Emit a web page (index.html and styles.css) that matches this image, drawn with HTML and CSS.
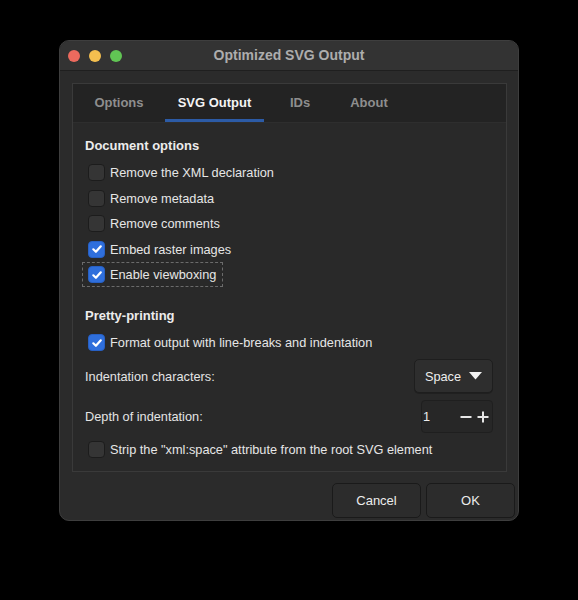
FILE: index.html
```html
<!DOCTYPE html>
<html>
<head>
<meta charset="utf-8">
<link rel="stylesheet" href="styles.css">
</head>
<body>
<div class="window">
  <div class="titlebar">
    <div class="lights">
      <span class="light red"></span>
      <span class="light yellow"></span>
      <span class="light green"></span>
    </div>
    <div class="title">Optimized SVG Output</div>
  </div>
  <div class="body">
    <div class="pane">
      <div class="tabs">
        <div class="tab t-options">Options</div>
        <div class="tab t-svg active">SVG Output</div>
        <div class="tab t-ids">IDs</div>
        <div class="tab t-about">About</div>
      </div>
      <div class="content">
        <div class="group-title">Document options</div>
        <div class="row"><label class="check"><span class="box"></span>Remove the XML declaration</label></div>
        <div class="row"><label class="check"><span class="box"></span>Remove metadata</label></div>
        <div class="row"><label class="check"><span class="box"></span>Remove comments</label></div>
        <div class="row"><label class="check"><span class="box on"><svg viewBox="0 0 12 12" width="12" height="12"><path d="M2.3 6.3 L4.9 8.8 L9.8 3.3" fill="none" stroke="#fff" stroke-width="2.2" stroke-linecap="round" stroke-linejoin="round"/></svg></span>Embed raster images</label></div>
        <div class="row"><label class="check focus"><span class="box on"><svg viewBox="0 0 12 12" width="12" height="12"><path d="M2.3 6.3 L4.9 8.8 L9.8 3.3" fill="none" stroke="#fff" stroke-width="2.2" stroke-linecap="round" stroke-linejoin="round"/></svg></span>Enable viewboxing</label></div>

        <div class="group-title second">Pretty-printing</div>
        <div class="row"><label class="check"><span class="box on"><svg viewBox="0 0 12 12" width="12" height="12"><path d="M2.3 6.3 L4.9 8.8 L9.8 3.3" fill="none" stroke="#fff" stroke-width="2.2" stroke-linecap="round" stroke-linejoin="round"/></svg></span>Format output with line-breaks and indentation</label></div>
        <div class="field field-chars">
          <span class="field-label">Indentation characters:</span>
          <div class="dropdown">Space <svg viewBox="0 0 13 8" width="13" height="8"><path d="M0 0 H13 L6.5 7.5 Z" fill="#f2f2f2"/></svg></div>
        </div>
        <div class="field field-depth">
          <span class="field-label">Depth of indentation:</span>
          <div class="spin"><span class="spin-val">1</span><span class="spin-btns"><svg viewBox="0 0 12 12" width="12" height="12"><path d="M0.5 6 H11.5" stroke="#e6e6e6" stroke-width="2"/></svg><svg viewBox="0 0 12 12" width="12" height="12"><path d="M0.5 6 H11.5 M6 0.5 V11.5" stroke="#e6e6e6" stroke-width="2"/></svg></span></div>
        </div>
        <div class="row row-last"><label class="check"><span class="box"></span>Strip the "xml:space" attribute from the root SVG element</label></div>
      </div>
    </div>
  </div>
  <div class="footer">
    <button class="btn">Cancel</button>
    <button class="btn">OK</button>
  </div>
</div>
</body>
</html>
```
FILE: styles.css
```css
* { box-sizing: border-box; }
html, body { margin: 0; padding: 0; background: #000; }
body {
  font-family: "Liberation Sans", Arial, sans-serif;
  font-size: 12.75px;
  color: #e4e4e4;
  padding: 40px 0 0 59px;
}
.window {
  width: 460px;
  height: 481px;
  background: #2b2b2b;
  border-radius: 10px;
  border: 1px solid #3e3e3e;
  display: flex;
  flex-direction: column;
  overflow: hidden;
}
.titlebar {
  height: 30px;
  background: #333333;
  border-bottom: 1px solid #1f1f1f;
  display: flex;
  align-items: center;
  position: relative;
}
.lights {
  display: flex;
  gap: 9px;
  padding-left: 8px;
}
.light {
  width: 12px;
  height: 12px;
  border-radius: 50%;
  display: block;
}
.red { background: #ec6a5e; }
.yellow { background: #f4bf4f; }
.green { background: #61c554; }
.title {
  position: absolute;
  left: 0; right: 0; top: 0;
  line-height: 29px;
  text-align: center;
  font-weight: bold;
  font-size: 14px;
  color: #adadad;
  pointer-events: none;
}
.body {
  padding: 12px 12px 0 12px;
}
.pane {
  width: 435px;
  height: 389px;
  border: 1px solid #3a3a3a;
  background: #292929;
  display: flex;
  flex-direction: column;
}
.tabs {
  height: 39px;
  background: #232323;
  display: flex;
  align-items: stretch;
  border-bottom: 1px solid #2e2e2e;
}
.tab {
  font-weight: bold;
  font-size: 13px;
  color: #8e8e8e;
  display: flex;
  align-items: center;
  justify-content: center;
  border-bottom: 3px solid transparent;
  padding-top: 2px;
}
.tab.active { color: #f4f4f4; border-bottom-color: #2c5ba6; }
.t-options { width: 92px; }
.t-svg { width: 99px; }
.t-ids { width: 72px; }
.t-about { width: 66px; }
.content {
  padding: 13px 13px 0 12px;
  display: flex;
  flex-direction: column;
}
.group-title {
  height: 20px;
  line-height: 20px;
  font-weight: bold;
  font-size: 13px;
  color: #ececec;
  margin-bottom: 4px;
}
.group-title.second { margin-top: 18.5px; }
.row {
  height: 25.5px;
  display: flex;
  align-items: center;
}
.check {
  display: inline-flex;
  align-items: center;
  height: 23px;
  margin-left: -2px;
  padding: 0 6px 0 5px;
  gap: 5px;
  color: #e6e6e6;
}
.check.focus {
  outline: 1px dashed #6b6b6b;
}
.box {
  width: 17px;
  height: 17px;
  border-radius: 4px;
  background: #353535;
  border: 1px solid #1c1c1c;
  display: flex;
  align-items: center;
  justify-content: center;
}
.box.on {
  background: #2f6fdc;
  border-color: #2760c4;
}
.field {
  display: flex;
  align-items: center;
  justify-content: space-between;
}
.field-chars { height: 34px; margin-top: 3.5px; }
.field-depth { height: 33px; margin-top: 7px; }
.dropdown {
  width: 79px;
  height: 34px;
  border-radius: 5px;
  background: #2e2e2e;
  border: 1px solid #1e1e1e;
  display: flex;
  align-items: center;
  justify-content: center;
  gap: 8px;
  color: #ededed;
  box-shadow: 0 1px 0 #202020;
}
.spin {
  width: 72px;
  height: 33px;
  border-radius: 4px;
  background: #272727;
  border: 1px solid #1f1f1f;
  display: flex;
  align-items: center;
  justify-content: space-between;
  padding: 0 3px 0 1px;
  color: #ededed;
}
.spin-btns { display: flex; gap: 5px; align-items: center; }
.spin-btns svg { display: block; }
.row-last { margin-top: 3.5px; }
.footer {
  display: flex;
  justify-content: flex-end;
  gap: 5px;
  padding: 11px 3px 0 0;
}
.btn {
  width: 89px;
  height: 35px;
  border-radius: 5px;
  background: #2c2c2c;
  border: 1px solid #1a1a1a;
  color: #ececec;
  font-family: "Liberation Sans", Arial, sans-serif;
  font-size: 13px;
  padding: 0;
}
```
